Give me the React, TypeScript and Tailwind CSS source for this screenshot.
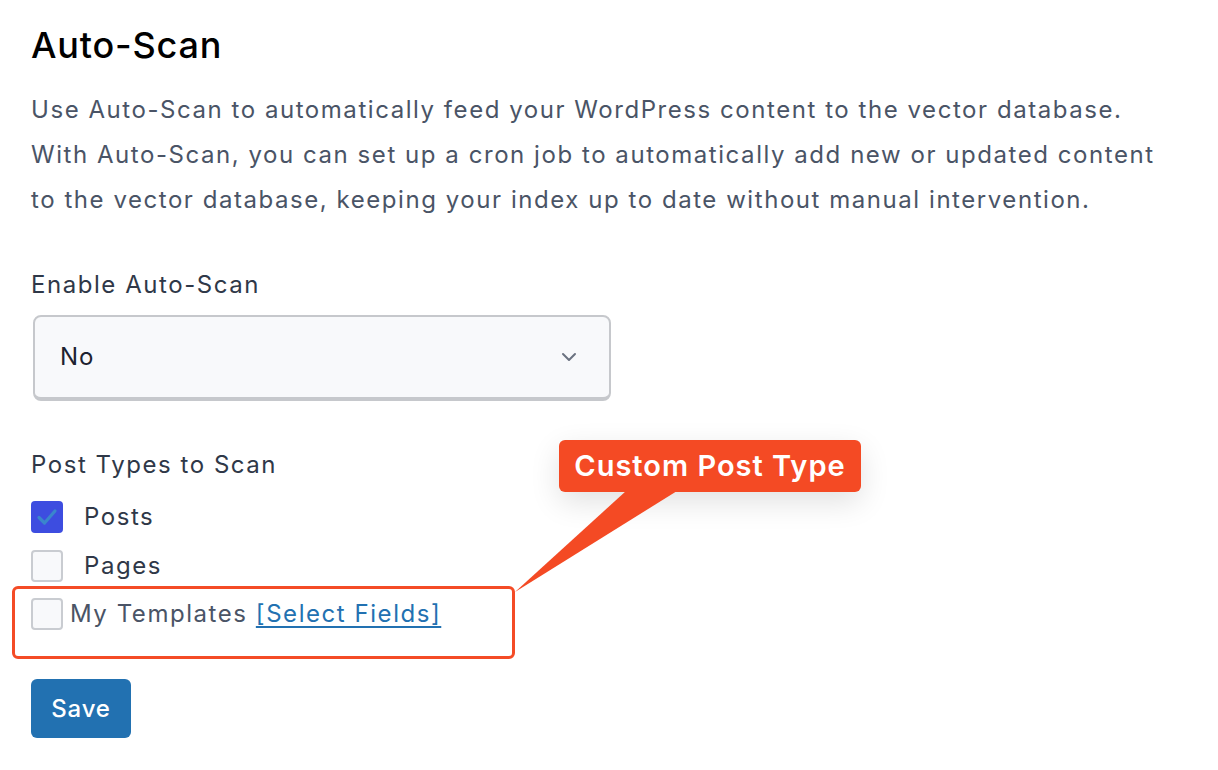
import { ChevronDown } from "lucide-react"

const Checkbox = ({ checked }: { checked?: boolean }) => (
    <span
        className={
            checked
                ? "flex h-[32px] w-[32px] items-center justify-center rounded-[4px] bg-[#3d4de0]"
                : "flex h-[32px] w-[32px] items-center justify-center rounded-[4px] border-2 border-[#c9ccd1] bg-[#f8f9fb]"
        }
    >
        {checked && (
            <svg width="22" height="22" viewBox="0 0 22 22">
                <path d="M3 11.5 L8.5 17 L19 5" fill="none" stroke="#3a86cc" strokeWidth="3.2" strokeLinecap="round" strokeLinejoin="round" />
            </svg>
        )}
    </span>
)

export default function App() {
    return (
        <div className="relative min-h-[770px] bg-white pl-[31px] pt-[23px] font-['Inter','Liberation_Sans',sans-serif]">
            <h1 className="text-[36px] font-medium leading-[44px] tracking-[0.8px] text-black">Auto-Scan</h1>
            <p className="mt-[20px] max-w-[1140px] text-[24px] leading-[45px] tracking-[1.55px] text-[#4a5466]">
                Use Auto-Scan to automatically feed your WordPress content to the vector database.
                With Auto-Scan, you can set up a cron job to automatically add new or updated content
                to the vector database, keeping your index up to date without manual intervention.
            </p>

            <div className="mt-[47px] text-[24px] leading-[32px] tracking-[1.55px] text-[#2f3848]">Enable Auto-Scan</div>
            <div className="ml-[2px] mt-[14px] flex h-[86px] w-[578px] items-center justify-between rounded-[8px] border-2 border-b-4 border-[#c6c8cc] bg-[#f8f9fb] pl-[25px] pr-[28px]">
                <span className="text-[24px] tracking-[1px] text-[#1d2230]">No</span>
                <ChevronDown className="h-[24px] w-[24px] text-[#6b7280]" strokeWidth={2} />
            </div>

            <div className="mt-[48px] text-[24px] leading-[32px] tracking-[1.55px] text-[#2f3848]">Post Types to Scan</div>
            <div className="mt-[20px] flex items-center gap-[21px]">
                <Checkbox checked />
                <span className="text-[24px] leading-[32px] tracking-[1.55px] text-[#2f3848]">Posts</span>
            </div>
            <div className="mt-[17px] flex items-center gap-[21px]">
                <Checkbox />
                <span className="text-[24px] leading-[32px] tracking-[1.55px] text-[#2f3848]">Pages</span>
            </div>
            <div className="-ml-[19px] mt-[4px] h-[73px] w-[503px] rounded-[6px] border-[3px] border-[#f44b26] pl-[16px] pt-[9px]">
                <div className="flex items-center gap-[7px]">
                    <Checkbox />
                    <span className="text-[24px] leading-[32px] tracking-[1.55px] text-[#4a5466]">
                        My Templates{" "}
                        <a href="#" className="text-[#2271b1] underline underline-offset-[4px]">[Select Fields]</a>
                    </span>
                </div>
            </div>

            <button className="mt-[20px] flex h-[59px] w-[100px] items-center justify-center rounded-[6px] bg-[#2271b1] text-[24px] font-medium tracking-[0.8px] text-white">
                Save
            </button>

            {/* callout annotation */}
            <div className="absolute left-[559px] top-[440px] flex h-[52px] w-[302px] items-center justify-center rounded-[6px] bg-[#f44a24] text-[29px] font-semibold tracking-[1px] text-white shadow-[0_10px_30px_rgba(0,0,0,0.12)]">
                Custom Post Type
            </div>
            <svg className="absolute left-0 top-0" width="1218" height="770" style={{ pointerEvents: "none" }}>
                <polygon points="626,491 677,491 515,592" fill="#f44a24" />
            </svg>
        </div>
    )
}
